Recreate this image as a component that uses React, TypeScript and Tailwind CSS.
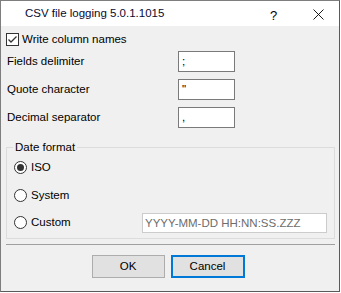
import React from "react";

const font = { fontFamily: '"Segoe UI", "Liberation Sans", Arial, sans-serif' };

function Radio({ checked }: { checked?: boolean }) {
  return (
    <span className="w-[13px] h-[13px] rounded-full border border-[#333333] bg-white flex items-center justify-center shrink-0">
      {checked && <span className="w-[7px] h-[7px] rounded-full bg-[#333333]" />}
    </span>
  );
}

function Field({ label, value }: { label: string; value: string }) {
  return (
    <div className="flex items-center h-[21px]">
      <span className="w-[172px] pl-[1px]">{label}</span>
      <div className="w-[57px] h-[21px] border border-[#7a7a7a] bg-white px-[3px] leading-[19px]">{value}</div>
    </div>
  );
}

export default function App() {
  return (
    <div className="w-[341px] h-[293px] bg-white">
      <div
        className="w-[340px] h-[292px] border border-[#7e7e7e] border-r-[#5a5a5a] border-b-[#5a5a5a] bg-[#f0f0f0] flex flex-col text-[11.5px] text-black"
        style={font}
      >
        <div className="h-[25px] bg-white flex items-center shrink-0 relative">
          <span className="ml-[24px] text-[#0a0a30]">CSV file logging 5.0.1.1015</span>
          <span className="absolute left-[269px] top-[5px] text-[13px]">?</span>
          <svg className="absolute left-[312px] top-[8px]" width="11" height="11" viewBox="0 0 11 11">
            <path d="M0.5 0.5 L10.5 10.5 M10.5 0.5 L0.5 10.5" stroke="#000" strokeWidth="0.9" />
          </svg>
        </div>
        <div className="flex flex-col px-[5px]">
          <div className="flex items-center mt-[7px] h-[13px]">
            <span className="w-[13px] h-[13px] border border-[#333333] bg-white flex items-center justify-center shrink-0">
              <svg width="11" height="11" viewBox="0 0 11 11">
                <path d="M1.5 5.5 L4 8 L9.5 2.5" stroke="#333" strokeWidth="1.3" fill="none" />
              </svg>
            </span>
            <span className="ml-[3px]">Write column names</span>
          </div>
          <div className="flex flex-col gap-[7px] mt-[5px]">
            <Field label="Fields delimiter" value=";" />
            <Field label="Quote character" value={'"'} />
            <Field label="Decimal separator" value="," />
          </div>
          <div className="relative mt-[19px] w-[329px] h-[92px] border border-[#dcdcdc] flex flex-col pl-[7px]">
            <span className="absolute left-[6px] -top-[9px] px-[2px] bg-[#f0f0f0] leading-[16px]">Date format</span>
            <div className="flex items-center h-[13px] mt-[13px]">
              <Radio checked />
              <span className="ml-[4px]">ISO</span>
            </div>
            <div className="flex items-center h-[13px] mt-[15px]">
              <Radio />
              <span className="ml-[4px]">System</span>
            </div>
            <div className="flex items-center h-[13px] mt-[14px]">
              <Radio />
              <span className="ml-[4px]">Custom</span>
              <div className="ml-auto mr-[7px] w-[185px] h-[20px] border border-[#cccccc] bg-white px-[2px] leading-[18px] text-[#6d6d6d]">
                YYYY-MM-DD HH:NN:SS.ZZZ
              </div>
            </div>
          </div>
          <div className="mt-[5px] w-[329px] h-[1px] bg-[#a0a0a0]" />
          <div className="flex justify-center gap-[6px] mt-[10px] pr-[4px]">
            <div className="w-[73px] h-[23px] border border-[#adadad] bg-[#e1e1e1] flex items-center justify-center">OK</div>
            <div className="w-[74px] h-[23px] border-2 border-[#0078d7] bg-[#e1e1e1] flex items-center justify-center">Cancel</div>
          </div>
        </div>
      </div>
    </div>
  );
}
